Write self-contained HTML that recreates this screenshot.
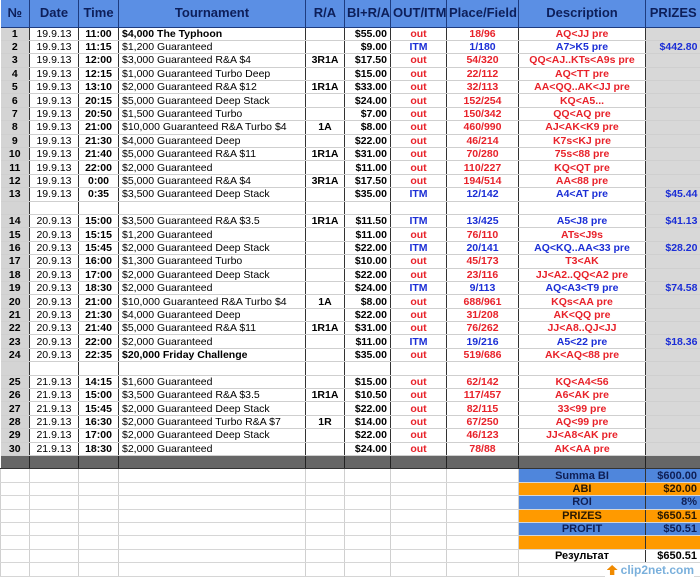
<!DOCTYPE html>
<html><head><meta charset="utf-8"><style>
*{margin:0;padding:0;box-sizing:border-box}
body{width:700px;height:579px;overflow:hidden;background:#fff;font-family:"Liberation Sans",Arial,sans-serif;font-size:10.5px;color:#000;position:relative}
table{border-collapse:collapse;table-layout:fixed;width:700px;position:absolute;left:0;top:0}
td{height:13.4px;line-height:12px;padding:0 2px;white-space:nowrap;overflow:hidden;border-left:1px solid #333;border-bottom:1px solid #cfcfcf;text-align:center}
tr.h td{height:27px;background:#5b8fe4;color:#0d1f5a;font-weight:bold;font-size:13px;border-left:1px solid #1e3c80;border-bottom:1px solid #1e3c80}
td.n{background:#d4d4d4;font-weight:bold;border-left:none}
td.t{text-align:left;padding-left:3px}
td.b{font-weight:bold}
td.r{text-align:right;font-weight:bold;padding-right:3px}
td.o{color:#e8222a;font-weight:bold}
td.i{color:#1b2ed6;font-weight:bold}
td.p{background:#d8d8d8;text-align:right;color:#1b2ed6;font-weight:bold;padding-right:3px}
tr.g td{background:#666;border-bottom:1px solid #333;border-left:1px solid #222}
tr.e td{border-left:1px solid #d0d0d0;border-bottom:1px solid #d6d6d6}
tr.e td.n{background:#fff}
td.sb{background:#4f86dc;color:#0f1f55;font-weight:bold;font-size:11px;border:1px solid #333}
td.so{background:#ff9a00;color:#2a1800;font-weight:bold;font-size:11px;border:1px solid #333}
td.sw{background:#fff;color:#000;font-weight:bold;font-size:11px;border:1px solid #333}
.v{text-align:right!important;padding-right:3px}
.logo{position:absolute;right:6px;top:563px;font-size:12px;color:#7ab0dc;font-weight:bold;background:#fff;padding-left:16px;line-height:14px}
.logo:before{content:"";position:absolute;left:2px;top:2px;width:11px;height:10px;background:#f08a00;clip-path:polygon(50% 0,100% 50%,70% 50%,70% 100%,30% 100%,30% 50%,0 50%)}
</style></head><body>
<table>
<colgroup><col style="width:29px"><col style="width:49px"><col style="width:40px"><col style="width:187px"><col style="width:39px"><col style="width:46px"><col style="width:56px"><col style="width:72px"><col style="width:127px"><col style="width:55px"></colgroup>
<tr class="h"><td style="border-left:none">№</td><td>Date</td><td>Time</td><td>Tournament</td><td>R/A</td><td>BI+R/A</td><td>OUT/ITM</td><td>Place/Field</td><td>Description</td><td>PRIZES</td></tr>
<tr><td class="n">1</td><td>19.9.13</td><td class="b">11:00</td><td class="t b">$4,000 The Typhoon</td><td class="b"></td><td class="r">$55.00</td><td class="o">out</td><td class="o">18/96</td><td class="o">AQ&lt;JJ pre</td><td class="p"></td></tr>
<tr><td class="n">2</td><td>19.9.13</td><td class="b">11:15</td><td class="t">$1,200 Guaranteed</td><td class="b"></td><td class="r">$9.00</td><td class="i">ITM</td><td class="i">1/180</td><td class="i">A7&gt;K5 pre</td><td class="p">$442.80</td></tr>
<tr><td class="n">3</td><td>19.9.13</td><td class="b">12:00</td><td class="t">$3,000 Guaranteed R&amp;A $4</td><td class="b">3R1A</td><td class="r">$17.50</td><td class="o">out</td><td class="o">54/320</td><td class="o">QQ&lt;AJ..KTs&lt;A9s pre</td><td class="p"></td></tr>
<tr><td class="n">4</td><td>19.9.13</td><td class="b">12:15</td><td class="t">$1,000 Guaranteed Turbo Deep</td><td class="b"></td><td class="r">$15.00</td><td class="o">out</td><td class="o">22/112</td><td class="o">AQ&lt;TT pre</td><td class="p"></td></tr>
<tr><td class="n">5</td><td>19.9.13</td><td class="b">13:10</td><td class="t">$2,000 Guaranteed R&amp;A $12</td><td class="b">1R1A</td><td class="r">$33.00</td><td class="o">out</td><td class="o">32/113</td><td class="o">AA&lt;QQ..AK&lt;JJ pre</td><td class="p"></td></tr>
<tr><td class="n">6</td><td>19.9.13</td><td class="b">20:15</td><td class="t">$5,000 Guaranteed Deep Stack</td><td class="b"></td><td class="r">$24.00</td><td class="o">out</td><td class="o">152/254</td><td class="o">KQ&lt;A5...</td><td class="p"></td></tr>
<tr><td class="n">7</td><td>19.9.13</td><td class="b">20:50</td><td class="t">$1,500 Guaranteed Turbo</td><td class="b"></td><td class="r">$7.00</td><td class="o">out</td><td class="o">150/342</td><td class="o">QQ&lt;AQ pre</td><td class="p"></td></tr>
<tr><td class="n">8</td><td>19.9.13</td><td class="b">21:00</td><td class="t">$10,000 Guaranteed R&amp;A Turbo $4</td><td class="b">1A</td><td class="r">$8.00</td><td class="o">out</td><td class="o">460/990</td><td class="o">AJ&lt;AK&lt;K9 pre</td><td class="p"></td></tr>
<tr><td class="n">9</td><td>19.9.13</td><td class="b">21:30</td><td class="t">$4,000 Guaranteed Deep</td><td class="b"></td><td class="r">$22.00</td><td class="o">out</td><td class="o">46/214</td><td class="o">K7s&lt;KJ pre</td><td class="p"></td></tr>
<tr><td class="n">10</td><td>19.9.13</td><td class="b">21:40</td><td class="t">$5,000 Guaranteed R&amp;A $11</td><td class="b">1R1A</td><td class="r">$31.00</td><td class="o">out</td><td class="o">70/280</td><td class="o">75s&lt;88 pre</td><td class="p"></td></tr>
<tr><td class="n">11</td><td>19.9.13</td><td class="b">22:00</td><td class="t">$2,000 Guaranteed</td><td class="b"></td><td class="r">$11.00</td><td class="o">out</td><td class="o">110/227</td><td class="o">KQ&lt;QT pre</td><td class="p"></td></tr>
<tr><td class="n">12</td><td>19.9.13</td><td class="b">0:00</td><td class="t">$5,000 Guaranteed R&amp;A $4</td><td class="b">3R1A</td><td class="r">$17.50</td><td class="o">out</td><td class="o">194/514</td><td class="o">AA&lt;88 pre</td><td class="p"></td></tr>
<tr><td class="n">13</td><td>19.9.13</td><td class="b">0:35</td><td class="t">$3,500 Guaranteed Deep Stack</td><td class="b"></td><td class="r">$35.00</td><td class="i">ITM</td><td class="i">12/142</td><td class="i">A4&lt;AT pre</td><td class="p">$45.44</td></tr>
<tr><td class="n"></td><td></td><td></td><td></td><td></td><td></td><td></td><td></td><td></td><td class="p"></td></tr>
<tr><td class="n">14</td><td>20.9.13</td><td class="b">15:00</td><td class="t">$3,500 Guaranteed R&amp;A $3.5</td><td class="b">1R1A</td><td class="r">$11.50</td><td class="i">ITM</td><td class="i">13/425</td><td class="i">A5&lt;J8 pre</td><td class="p">$41.13</td></tr>
<tr><td class="n">15</td><td>20.9.13</td><td class="b">15:15</td><td class="t">$1,200 Guaranteed</td><td class="b"></td><td class="r">$11.00</td><td class="o">out</td><td class="o">76/110</td><td class="o">ATs&lt;J9s</td><td class="p"></td></tr>
<tr><td class="n">16</td><td>20.9.13</td><td class="b">15:45</td><td class="t">$2,000 Guaranteed Deep Stack</td><td class="b"></td><td class="r">$22.00</td><td class="i">ITM</td><td class="i">20/141</td><td class="i">AQ&lt;KQ..AA&lt;33 pre</td><td class="p">$28.20</td></tr>
<tr><td class="n">17</td><td>20.9.13</td><td class="b">16:00</td><td class="t">$1,300 Guaranteed Turbo</td><td class="b"></td><td class="r">$10.00</td><td class="o">out</td><td class="o">45/173</td><td class="o">T3&lt;AK</td><td class="p"></td></tr>
<tr><td class="n">18</td><td>20.9.13</td><td class="b">17:00</td><td class="t">$2,000 Guaranteed Deep Stack</td><td class="b"></td><td class="r">$22.00</td><td class="o">out</td><td class="o">23/116</td><td class="o">JJ&lt;A2..QQ&lt;A2 pre</td><td class="p"></td></tr>
<tr><td class="n">19</td><td>20.9.13</td><td class="b">18:30</td><td class="t">$2,000 Guaranteed</td><td class="b"></td><td class="r">$24.00</td><td class="i">ITM</td><td class="i">9/113</td><td class="i">AQ&lt;A3&lt;T9 pre</td><td class="p">$74.58</td></tr>
<tr><td class="n">20</td><td>20.9.13</td><td class="b">21:00</td><td class="t">$10,000 Guaranteed R&amp;A Turbo $4</td><td class="b">1A</td><td class="r">$8.00</td><td class="o">out</td><td class="o">688/961</td><td class="o">KQs&lt;AA pre</td><td class="p"></td></tr>
<tr><td class="n">21</td><td>20.9.13</td><td class="b">21:30</td><td class="t">$4,000 Guaranteed Deep</td><td class="b"></td><td class="r">$22.00</td><td class="o">out</td><td class="o">31/208</td><td class="o">AK&lt;QQ pre</td><td class="p"></td></tr>
<tr><td class="n">22</td><td>20.9.13</td><td class="b">21:40</td><td class="t">$5,000 Guaranteed R&amp;A $11</td><td class="b">1R1A</td><td class="r">$31.00</td><td class="o">out</td><td class="o">76/262</td><td class="o">JJ&lt;A8..QJ&lt;JJ</td><td class="p"></td></tr>
<tr><td class="n">23</td><td>20.9.13</td><td class="b">22:00</td><td class="t">$2,000 Guaranteed</td><td class="b"></td><td class="r">$11.00</td><td class="i">ITM</td><td class="i">19/216</td><td class="i">A5&lt;22 pre</td><td class="p">$18.36</td></tr>
<tr><td class="n">24</td><td>20.9.13</td><td class="b">22:35</td><td class="t b">$20,000 Friday Challenge</td><td class="b"></td><td class="r">$35.00</td><td class="o">out</td><td class="o">519/686</td><td class="o">AK&lt;AQ&lt;88 pre</td><td class="p"></td></tr>
<tr><td class="n"></td><td></td><td></td><td></td><td></td><td></td><td></td><td></td><td></td><td class="p"></td></tr>
<tr><td class="n">25</td><td>21.9.13</td><td class="b">14:15</td><td class="t">$1,600 Guaranteed</td><td class="b"></td><td class="r">$15.00</td><td class="o">out</td><td class="o">62/142</td><td class="o">KQ&lt;A4&lt;56</td><td class="p"></td></tr>
<tr><td class="n">26</td><td>21.9.13</td><td class="b">15:00</td><td class="t">$3,500 Guaranteed R&amp;A $3.5</td><td class="b">1R1A</td><td class="r">$10.50</td><td class="o">out</td><td class="o">117/457</td><td class="o">A6&lt;AK pre</td><td class="p"></td></tr>
<tr><td class="n">27</td><td>21.9.13</td><td class="b">15:45</td><td class="t">$2,000 Guaranteed Deep Stack</td><td class="b"></td><td class="r">$22.00</td><td class="o">out</td><td class="o">82/115</td><td class="o">33&lt;99 pre</td><td class="p"></td></tr>
<tr><td class="n">28</td><td>21.9.13</td><td class="b">16:30</td><td class="t">$2,000 Guaranteed Turbo R&amp;A $7</td><td class="b">1R</td><td class="r">$14.00</td><td class="o">out</td><td class="o">67/250</td><td class="o">AQ&lt;99 pre</td><td class="p"></td></tr>
<tr><td class="n">29</td><td>21.9.13</td><td class="b">17:00</td><td class="t">$2,000 Guaranteed Deep Stack</td><td class="b"></td><td class="r">$22.00</td><td class="o">out</td><td class="o">46/123</td><td class="o">JJ&lt;A8&lt;AK pre</td><td class="p"></td></tr>
<tr><td class="n">30</td><td>21.9.13</td><td class="b">18:30</td><td class="t">$2,000 Guaranteed</td><td class="b"></td><td class="r">$24.00</td><td class="o">out</td><td class="o">78/88</td><td class="o">AK&lt;AA pre</td><td class="p"></td></tr>
<tr class="g"><td style="border-left:none"></td><td></td><td></td><td></td><td></td><td></td><td></td><td></td><td></td><td></td></tr>
<tr class="e"><td class="n"></td><td></td><td></td><td></td><td></td><td></td><td></td><td></td><td class="sb">Summa BI</td><td class="sb v">$600.00</td></tr>
<tr class="e"><td class="n"></td><td></td><td></td><td></td><td></td><td></td><td></td><td></td><td class="so">ABI</td><td class="so v">$20.00</td></tr>
<tr class="e"><td class="n"></td><td></td><td></td><td></td><td></td><td></td><td></td><td></td><td class="sb">ROI</td><td class="sb v">8%</td></tr>
<tr class="e"><td class="n"></td><td></td><td></td><td></td><td></td><td></td><td></td><td></td><td class="so">PRIZES</td><td class="so v">$650.51</td></tr>
<tr class="e"><td class="n"></td><td></td><td></td><td></td><td></td><td></td><td></td><td></td><td class="sb">PROFIT</td><td class="sb v">$50.51</td></tr>
<tr class="e"><td class="n"></td><td></td><td></td><td></td><td></td><td></td><td></td><td></td><td class="so"></td><td class="so v"></td></tr>
<tr class="e"><td class="n"></td><td></td><td></td><td></td><td></td><td></td><td></td><td></td><td class="sw">Результат</td><td class="sw v">$650.51</td></tr>
<tr class="e"><td class="n"></td><td></td><td></td><td></td><td></td><td></td><td></td><td></td><td></td><td></td></tr>
</table>
<div class="logo">clip2net.com</div>
</body></html>
